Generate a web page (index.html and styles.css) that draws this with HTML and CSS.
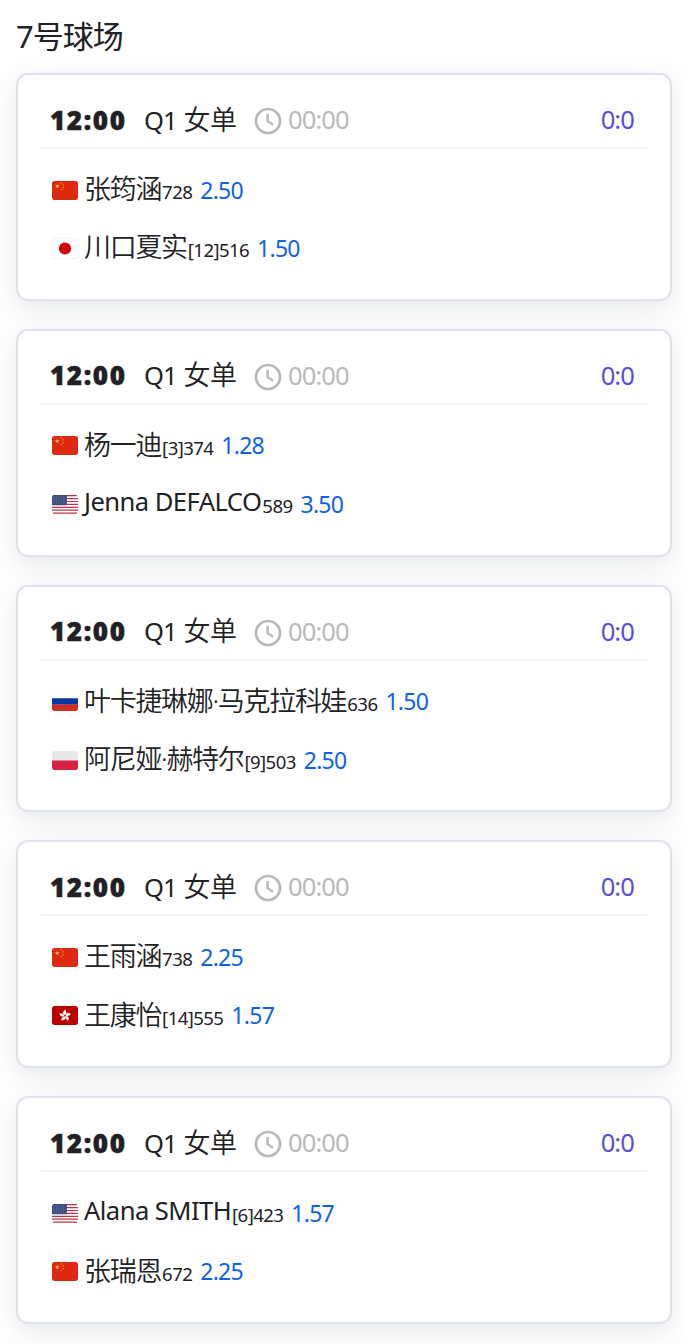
FILE: index.html
```
<!DOCTYPE html>
<html lang="zh-CN">
<head>
  <meta charset="UTF-8" />
  <meta name="viewport" content="width=device-width, initial-scale=1.0"/>
  <title>7号球场</title>
  <link rel="stylesheet" href="styles.css">
</head>

<body>
  <svg class="sprite" width="0" height="0">
    <symbol id="clock" viewBox="0 0 28 28">
      <circle cx="14" cy="14" r="12" fill="none" stroke="currentColor" stroke-width="2.7"/>
      <path d="M13.6 7v7.2l5.4 3.6" fill="none" stroke="currentColor" stroke-width="2.5"/>
    </symbol>
    <symbol id="cn" viewBox="0 0 26 19">
      <rect width="26" height="19" rx="2" fill="#de2910"/>
      <path d="M5.2 2.5l.6 1.8h1.9L6.2 5.4l.6 1.8-1.6-1.1-1.5 1.1.6-1.8-1.5-1.1h1.9z" fill="#ffc32b"/>
      <g fill="#f6a52b">
        <circle cx="9.3" cy="1.9" r=".7"/>
        <circle cx="11.2" cy="3.9" r=".7"/>
        <circle cx="11.2" cy="6.7" r=".7"/>
        <circle cx="9.3" cy="8.6" r=".7"/>
      </g>
    </symbol>
    <symbol id="jp" viewBox="0 0 26 19">
      <rect width="26" height="19" rx="2" fill="#fff"/>
      <circle cx="13" cy="9.5" r="6.1" fill="#d30000"/>
    </symbol>
    <symbol id="us" viewBox="0 0 26 19">
      <rect width="26" height="19" rx="2" fill="#fff"/>
      <path d="M1 .7h24M0 3.6h26M0 6.5h26M0 9.4h26M0 12.3h26M0 15.2h26M1 18.2h24" stroke="#bf3247" stroke-width="1.2"/>
      <path d="M2 0h13v10.2H0V2a2 2 0 0 1 2-2z" fill="#3c4d7d"/>
      <path d="M1.5 2h13M1.5 4.1h13M1.5 6.2h13M1.5 8.3h13" stroke="#7683a8" stroke-width=".8" stroke-dasharray="1 1.4"/>
    </symbol>
    <symbol id="ru" viewBox="0 0 26 19">
      <path d="M0 0h26v7H0z" fill="#fff"/>
      <path d="M0 6.3h26v6.4H0z" fill="#0638a5"/>
      <path d="M0 12.6h26V17a2 2 0 0 1-2 2H2a2 2 0 0 1-2-2z" fill="#d52b1e"/>
    </symbol>
    <symbol id="pl" viewBox="0 0 26 19">
      <rect width="26" height="19" rx="2" fill="#e8e8e8"/>
      <path d="M0 9.5h26V17a2 2 0 0 1-2 2H2a2 2 0 0 1-2-2z" fill="#d62142"/>
    </symbol>
    <symbol id="hk" viewBox="0 0 26 19">
      <rect width="26" height="19" rx="2" fill="#bb0000"/>
      <g transform="translate(13 9.7)" fill="#fff">
        <path d="M0-.6C-2.8-2-2.4-5 .8-6 0-4.7 2.8-3.5 0-.6z"/>
        <path d="M0-.6C-2.8-2-2.4-5 .8-6 0-4.7 2.8-3.5 0-.6z" transform="rotate(72)"/>
        <path d="M0-.6C-2.8-2-2.4-5 .8-6 0-4.7 2.8-3.5 0-.6z" transform="rotate(144)"/>
        <path d="M0-.6C-2.8-2-2.4-5 .8-6 0-4.7 2.8-3.5 0-.6z" transform="rotate(216)"/>
        <path d="M0-.6C-2.8-2-2.4-5 .8-6 0-4.7 2.8-3.5 0-.6z" transform="rotate(288)"/>
      </g>
    </symbol>
  </svg>

  <h1 class="court">7号球场</h1>

  <div class="match-list">
    <div class="match">
      <div class="match-head">
        <span class="time">12:00</span>
        <span class="round">Q1 <span class="cjk">女单</span></span>
        <svg class="clock"><use href="#clock"/></svg>
        <span class="duration">00:00</span>
        <span class="score">0:0</span>
      </div>
      <div class="player">
        <svg class="flag"><use href="#cn"/></svg>
        <span class="name">张筠涵</span><span class="rank">728</span><span class="odds">2.50</span>
      </div>
      <div class="player">
        <svg class="flag flag-line"><use href="#jp"/></svg>
        <span class="name">川口夏实</span><span class="rank">[12]516</span><span class="odds">1.50</span>
      </div>
    </div>

    <div class="match">
      <div class="match-head">
        <span class="time">12:00</span>
        <span class="round">Q1 <span class="cjk">女单</span></span>
        <svg class="clock"><use href="#clock"/></svg>
        <span class="duration">00:00</span>
        <span class="score">0:0</span>
      </div>
      <div class="player">
        <svg class="flag"><use href="#cn"/></svg>
        <span class="name">杨一迪</span><span class="rank">[3]374</span><span class="odds">1.28</span>
      </div>
      <div class="player">
        <svg class="flag"><use href="#us"/></svg>
        <span class="name latin">Jenna DEFALCO</span><span class="rank">589</span><span class="odds">3.50</span>
      </div>
    </div>

    <div class="match">
      <div class="match-head">
        <span class="time">12:00</span>
        <span class="round">Q1 <span class="cjk">女单</span></span>
        <svg class="clock"><use href="#clock"/></svg>
        <span class="duration">00:00</span>
        <span class="score">0:0</span>
      </div>
      <div class="player">
        <svg class="flag"><use href="#ru"/></svg>
        <span class="name">叶卡捷琳娜·马克拉科娃</span><span class="rank">636</span><span class="odds">1.50</span>
      </div>
      <div class="player">
        <svg class="flag"><use href="#pl"/></svg>
        <span class="name">阿尼娅·赫特尔</span><span class="rank">[9]503</span><span class="odds">2.50</span>
      </div>
    </div>

    <div class="match">
      <div class="match-head">
        <span class="time">12:00</span>
        <span class="round">Q1 <span class="cjk">女单</span></span>
        <svg class="clock"><use href="#clock"/></svg>
        <span class="duration">00:00</span>
        <span class="score">0:0</span>
      </div>
      <div class="player">
        <svg class="flag"><use href="#cn"/></svg>
        <span class="name">王雨涵</span><span class="rank">738</span><span class="odds">2.25</span>
      </div>
      <div class="player">
        <svg class="flag"><use href="#hk"/></svg>
        <span class="name">王康怡</span><span class="rank">[14]555</span><span class="odds">1.57</span>
      </div>
    </div>

    <div class="match">
      <div class="match-head">
        <span class="time">12:00</span>
        <span class="round">Q1 <span class="cjk">女单</span></span>
        <svg class="clock"><use href="#clock"/></svg>
        <span class="duration">00:00</span>
        <span class="score">0:0</span>
      </div>
      <div class="player">
        <svg class="flag"><use href="#us"/></svg>
        <span class="name latin">Alana SMITH</span><span class="rank">[6]423</span><span class="odds">1.57</span>
      </div>
      <div class="player">
        <svg class="flag"><use href="#cn"/></svg>
        <span class="name">张瑞恩</span><span class="rank">672</span><span class="odds">2.25</span>
      </div>
    </div>
  </div>
</body>
</html>
```
FILE: styles.css
```
body {
  margin: 0;
  height: 1344px;
  overflow: hidden;
  font-family: "Noto Sans", "Noto Sans CJK SC", sans-serif;
  font-weight: 390;
  color: #212124;
  background-color: #fff;
}

.sprite {
  display: block;
}

.court {
  margin: 0;
  padding-left: 16px;
  height: 73px;
  line-height: 72px;
  font-size: 31px;
  font-weight: 380;
  letter-spacing: -1px;
}

.match-list {
  display: flex;
  flex-direction: column;
  gap: 28px;
  padding: 0 12px 0 16px;
}

.match {
  height: 227.8px;
  box-sizing: border-box;
  padding: 16px 23px 0;
  border: 2px solid #dfe2eb;
  border-radius: 12px;
  background-color: #fff;
  box-shadow: 0 8px 28px rgba(40, 55, 55, 0.12);
}

.match-head {
  display: flex;
  align-items: center;
  height: 56px;
  padding: 0 13px 0 9px;
  margin-bottom: 9.4px;
  border-bottom: 2px solid #f2f3f5;
  font-size: 25.6px;
  letter-spacing: -0.036em;
}

.time {
  width: 94px;
  padding-top: 1px;
  font-size: 26px;
  font-weight: 900;
  letter-spacing: 0.062em;
  -webkit-text-stroke: 0.5px #212124;
}

.round {
  width: 110px;
  margin-top: -2px;
}

.cjk {
  margin-left: 1px;
  font-size: 27px;
  font-weight: 360;
  letter-spacing: -0.6px;
}

.clock {
  width: 28px;
  height: 28px;
  margin: 4px 6px 0 0;
  color: #b9b9b9;
}

.duration {
  padding-top: 1px;
  color: #b9b9b9;
}

.score {
  margin-left: auto;
  padding-top: 1px;
  color: #5a50dc;
}

.player {
  display: flex;
  align-items: center;
  height: 58.4px;
  padding-left: 11px;
}

.flag {
  width: 26px;
  height: 19px;
  margin: 5px 6px 0 0;
  border-radius: 2px;
}

.flag-line {
  box-shadow: 0 0 0 1px #f2f2f2;
}

.name {
  font-size: 27px;
  font-weight: 360;
  letter-spacing: -1.3px;
}

.latin {
  font-size: 25.6px;
  font-weight: 390;
  letter-spacing: -0.022em;
}

.rank {
  padding-top: 8px;
  margin-left: 1px;
  font-size: 18.6px;
  letter-spacing: -0.032em;
}

.odds {
  margin-left: 8px;
  padding-top: 4px;
  font-size: 23px;
  letter-spacing: -0.032em;
  color: #0f62ec;
}
```
